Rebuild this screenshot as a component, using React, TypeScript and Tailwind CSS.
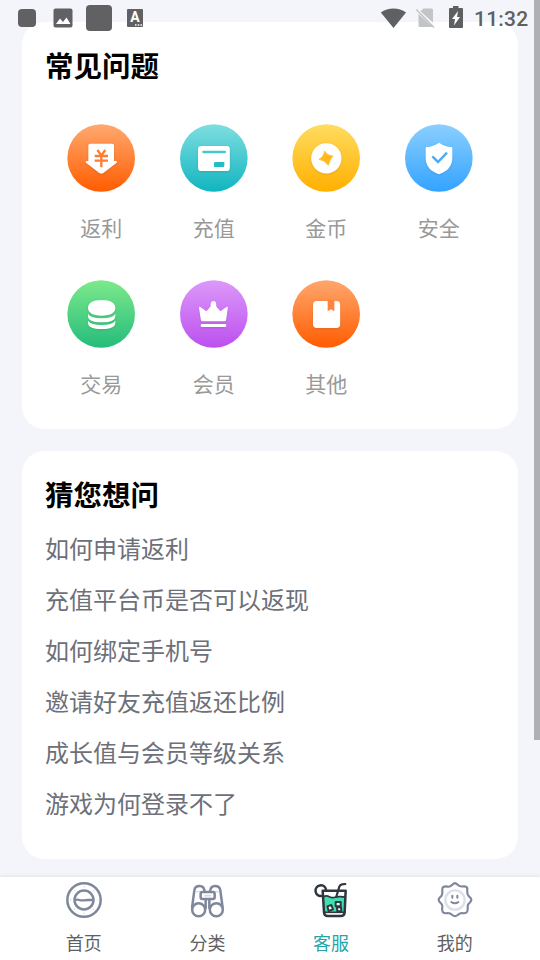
import type { ReactNode } from "react";

type Category = { label: string; from: string; to: string; x: number; y: number; cx: number; art: ReactNode };

const categories: Category[] = [
  {
    label: "返利", from: "#ffa96f", to: "#ff5c00", x: 51, y: 42, cx: 153.5,
    art: (
      <>
        <path d="M121 101h66q5 0 5 5v47h7q4 3-1 7l-37 28q-7 5-14 0l-37-28q-5-4-1-7h6v-47q0-5 6-5z" fill="#fff" />
        <path d="M142 120l12 16 12-16M154 136v36M134 138h40M134 152h40" fill="none" stroke="#ff7c35" strokeWidth="7" />
      </>
    ),
  },
  {
    label: "充值", from: "#7fdee0", to: "#10b5c0", x: 390, y: 42, cx: 491.5,
    art: (
      <>
        <rect x="444" y="108" width="95.500" height="75" rx="10" fill="#fff" />
        <path d="M460 126h65" stroke="#45c8cf" strokeWidth="7" strokeLinecap="round" />
        <path d="M496 156h27v11q0 4-4 4h-27v-11q0-4 4-4z" fill="#24bdc7" />
      </>
    ),
  },
  {
    label: "金币", from: "#ffdc60", to: "#ffb000", x: 36, y: 42, cx: 138.5,
    art: (
      <>
        <circle cx="139" cy="145" r="45.500" fill="#fff" />
        <path d="M134 123Q140 136 159 138Q149 148 145 166Q134 151 117 148Q132 139 134 123z" fill="#ffb91c" stroke="#ffb91c" strokeWidth="2" strokeLinejoin="round" />
      </>
    ),
  },
  {
    label: "安全", from: "#8bcfff", to: "#33a3ff", x: 375, y: 42, cx: 476.5,
    art: (
      <>
        <path d="M477 98q17 12 36 13q4 0 4 4v27c0 27-14 42-40 51c-26-9-40-24-40-51v-27q0-4 4-4q19-1 36-13z" fill="#fff" />
        <path d="M457 139l17 17 27-28" fill="none" stroke="#4dacf6" strokeWidth="7.500" />
      </>
    ),
  },
  {
    label: "交易", from: "#7de98b", to: "#24bc7b", x: 51, y: 30, cx: 153.5,
    art: (
      <>
        <path d="M114 114c0-14 12-24 41-24s41 10 41 24c0 13-13 23-41 23s-41-10-41-23z" fill="#fff" />
        <path d="M114 132q9 13 41 13t41-13v7q-1 18-41 18t-41-18zM114 152q9 13 41 13t41-13v7q-1 18-41 18t-41-18z" fill="#fff" />
      </>
    ),
  },
  {
    label: "会员", from: "#dc99fa", to: "#bc50ee", x: 390, y: 30, cx: 491.5,
    art: (
      <>
        <path d="M447 114q0-5 4-3l16 11q3 2 5-1l10-12q-2-15 8.500-16q10 1 8 16l10 12q2 3 5 1l16-11q5-2 4 3l-5 35q-1 5-5 5h-66q-4 0-5-5z" fill="#fff" />
        <rect x="452" y="162" width="77" height="9" rx="3.500" fill="#fff" />
      </>
    ),
  },
  {
    label: "其他", from: "#ffa76d", to: "#ff5c00", x: 36, y: 30, cx: 138.5,
    art: (
      <>
        <rect x="99" y="93" width="81.500" height="81" rx="11" fill="#fff" />
        <path d="M143 92h20v32l-10-6-10 6z" fill="#ff823d" />
      </>
    ),
  },
];

const questions = [
  "如何申请返利",
  "充值平台币是否可以返现",
  "如何绑定手机号",
  "邀请好友充值返还比例",
  "成长值与会员等级关系",
  "游戏为何登录不了",
];

const tabs: { label: string; box: string; active?: boolean; art: ReactNode }[] = [
  {
    label: "首页", box: "48 36 108 108",
    art: (
      <g fill="none" stroke="#7f879c">
        <circle cx="102" cy="90" r="50" strokeWidth="7.500" />
        <circle cx="102" cy="90" r="28.500" strokeWidth="7.500" />
        <path d="M75 90q7-2 13 0t13 1 13-1 14 0" strokeWidth="7" />
        <circle cx="102" cy="90" r="40" stroke="#c9cdd8" strokeWidth="4" strokeDasharray="3 28.400" strokeDashoffset="1.500" />
      </g>
    ),
  },
  {
    label: "分类", box: "417 36 108 108",
    art: (
      <g fill="none" stroke="#7f879c" strokeWidth="7.500" strokeLinejoin="round">
        <path d="M438 65h14M492 65h14" stroke="#d5d8e0" strokeWidth="4" />
        <path d="M426 114l7-53q2-13 16-13 13 0 15 16M467 88v28M518 114l-7-53q-2-13-16-13-13 0-15 16M478 88v28" />
        <circle cx="446" cy="119" r="19.500" />
        <circle cx="499" cy="119" r="19.500" />
        <rect x="452" y="66" width="42" height="21" rx="5" fill="#fff" />
        <path d="M463 77h20" stroke="#d5d8e0" strokeWidth="5" />
      </g>
    ),
  },
  {
    label: "客服", box: "36 36 108 108", active: true,
    art: (
      <g fill="none" stroke="#30363f" strokeWidth="7.500" strokeLinejoin="round" strokeLinecap="round">
        <path d="M66 80q9-5 18 0t17 2 17-2 16 0l-4 50H71z" fill="#3fdfb0" stroke="none" />
        <path d="M65 62h69l-3 65q-1 11-11 11H80q-10 0-11-11z" />
        <path d="M67 80q9-5 18 0t17 2 17-2 14 0" strokeWidth="5" />
        <path d="M72 127h56" strokeWidth="4.500" />
        <path d="M60 78a16 16 0 1 1 15-20" />
        <path d="M106 80l9-30q2-6 8-7l10-1" strokeWidth="6.500" />
        <g fill="#e6fff8" strokeWidth="6">
          <path d="M79 109l12-4 5 13-13 5zM104 96l15 0 0 13-15 0zM108 112l12-1 1 12-12 1z" />
        </g>
      </g>
    ),
  },
  {
    label: "我的", box: "411 36 108 108",
    art: (
      <g fill="none" stroke="#7f879c" strokeLinecap="round">
        <path d="M465 39.500Q470 40 474 45Q480 51 490 49Q500 48 502 55Q501 65 503 73Q505 78 510 82Q518 89 510 97Q502 103 503 111Q504 124 500 127Q494 131 487 129Q479 129 473 135Q465 142 457 135Q451 129 443 129Q433 131 429 127Q425 122 427 111Q428 103 420 97Q412 89 420 82Q428 76 427 67Q426 53 430 51Q435 48 443 50Q450 51 456 45Q460 40 465 39.500z" strokeWidth="6.500" />
        <circle cx="465" cy="90" r="29" stroke="#dde0e9" strokeWidth="7" />
        <path d="M457 77v6M472 77v6" strokeWidth="6" />
        <path d="M454 96q11 8 21 0" strokeWidth="6" />
      </g>
    ),
  },
];

function StatusBar() {
  return (
    <header className="absolute inset-x-0 top-0 flex h-9 items-center justify-between pl-[18px] pr-[11px] text-[#5f6062]">
      <div className="flex items-center">
        <span className="size-[18px] rounded-[4px] bg-[#616163]" />
        <svg className="ml-[17px] h-5 w-5" viewBox="0 0 20 20">
          <rect x="0.500" y="0.500" width="19" height="19" rx="2" fill="#616163" />
          <path d="M3 16l4-5.500 3 3.500 3.500-4.500 4 6.500z" fill="#fff" />
        </svg>
        <span className="ml-[13px] size-[26px] rounded-[4px] bg-[#616163]" />
        <span className="ml-[15px] flex h-[18px] w-4 flex-col items-center rounded-[1px] bg-[#616163] font-['Roboto',sans-serif] text-[14px] font-bold leading-[17px] text-white">
          A
          <svg className="-mt-[2px] ml-[7px] h-[2px] w-[7px] shrink-0" viewBox="0 0 7 2">
            <path d="M0 1h7" stroke="#fff" strokeWidth="1.500" strokeDasharray="1.500 1.200" />
          </svg>
        </span>
      </div>
      <div className="flex items-center">
        <svg className="h-[21px] w-[26px]" viewBox="0 0 26 21" fill="currentColor">
          <path d="M13.500 20L0.800 4.500C8-1 19-1 26 4.500z" />
        </svg>
        <svg className="ml-[9px] h-[22px] w-5" viewBox="0 0 20 22">
          <path d="M8.500 1.500h8q1.500 0 1.500 1.500V15.500L5.500 4.300zM3.500 7l14.500 13H5Q3.500 20 3.500 18.500z" fill="#c3c4c6" />
          <path d="M1.300 2.500L19 20.500" stroke="#c3c4c6" strokeWidth="1.600" />
        </svg>
        <svg className="-mt-0.5 ml-[13px] h-[22px] w-[15px]" viewBox="0 0 15 22">
          <path d="M5 0h5.500v2H14q1 0 1 1v18q0 1-1 1H2q-1 0-1-1V3q0-1 1-1h3z" fill="currentColor" />
          <path d="M10 5L4 13h3l-1 6.500L12 11H9z" fill="#fff" />
        </svg>
        <time className="ml-[11px] w-[55px] whitespace-nowrap pt-px font-['Roboto',sans-serif] text-[21px] font-medium leading-9 tracking-[.2px]">11:32</time>
      </div>
    </header>
  );
}

function CategoryItem({ item, index }: { item: Category; index: number }) {
  const id = `category-${index}`;
  return (
    <button className="flex h-[156px] flex-col items-center">
      <svg className="size-[68px]" viewBox={`${item.x} ${item.y} 204 204`}>
        <defs>
          <linearGradient id={id} x1="0" y1="0" x2="0" y2="1">
            <stop stopColor={item.from} />
            <stop offset="1" stopColor={item.to} />
          </linearGradient>
        </defs>
        <circle cx={item.cx} cy={item.y + 102} r="101.500" fill={`url(#${id})`} />
        <g className="drop-shadow-[0_2px_3px_rgba(0,0,0,0.12)]">{item.art}</g>
      </svg>
      <span className="mt-5 text-[21px] leading-[30px] text-[#999]">{item.label}</span>
    </button>
  );
}

export default function App() {
  return (
    <div className="relative flex h-[960px] w-[540px] flex-col overflow-hidden bg-[#f4f5fa] font-['Noto_Sans_CJK_SC',sans-serif]">
      <main className="flex flex-1 flex-col gap-[22px] px-[22px] pt-[22px]">
        <section className="h-[407px] rounded-[22.5px] bg-white px-[23px] pt-[22px]">
          <h2 className="text-[28.5px] font-bold leading-[42px] text-black">常见问题</h2>
          <div className="mt-[38px] grid grid-cols-4">
            {categories.map((item, i) => <CategoryItem key={item.label} item={item} index={i} />)}
          </div>
        </section>
        <section className="h-[408px] rounded-[22.5px] bg-white px-[23px] pt-[22px]">
          <h2 className="text-[28.5px] font-bold leading-[42px] text-black">猜您想问</h2>
          <ul className="mt-[7px]">
            {questions.map((q) => (
              <li key={q} className="text-[24px] leading-[51px] text-[#6d7078]">{q}</li>
            ))}
          </ul>
        </section>
      </main>
      <nav className="grid h-[83px] grid-cols-4 bg-white pl-[22px] pr-[23.5px] shadow-[0_-1px_4px_rgba(0,0,0,0.07)]">
        {tabs.map((tab) => (
          <button key={tab.label} className="flex flex-col items-center pt-[5px]">
            <svg className="size-9" viewBox={tab.box}>{tab.art}</svg>
            <span className={tab.active ? "mt-[11px] text-[18px] leading-[26px] text-[#22a5ab]" : "mt-[11px] text-[18px] leading-[26px] text-[#606060]"}>{tab.label}</span>
          </button>
        ))}
      </nav>
      <StatusBar />
      <div className="absolute right-0 top-0 h-[740px] w-1.5 bg-[#afb0b3]" />
    </div>
  );
}
